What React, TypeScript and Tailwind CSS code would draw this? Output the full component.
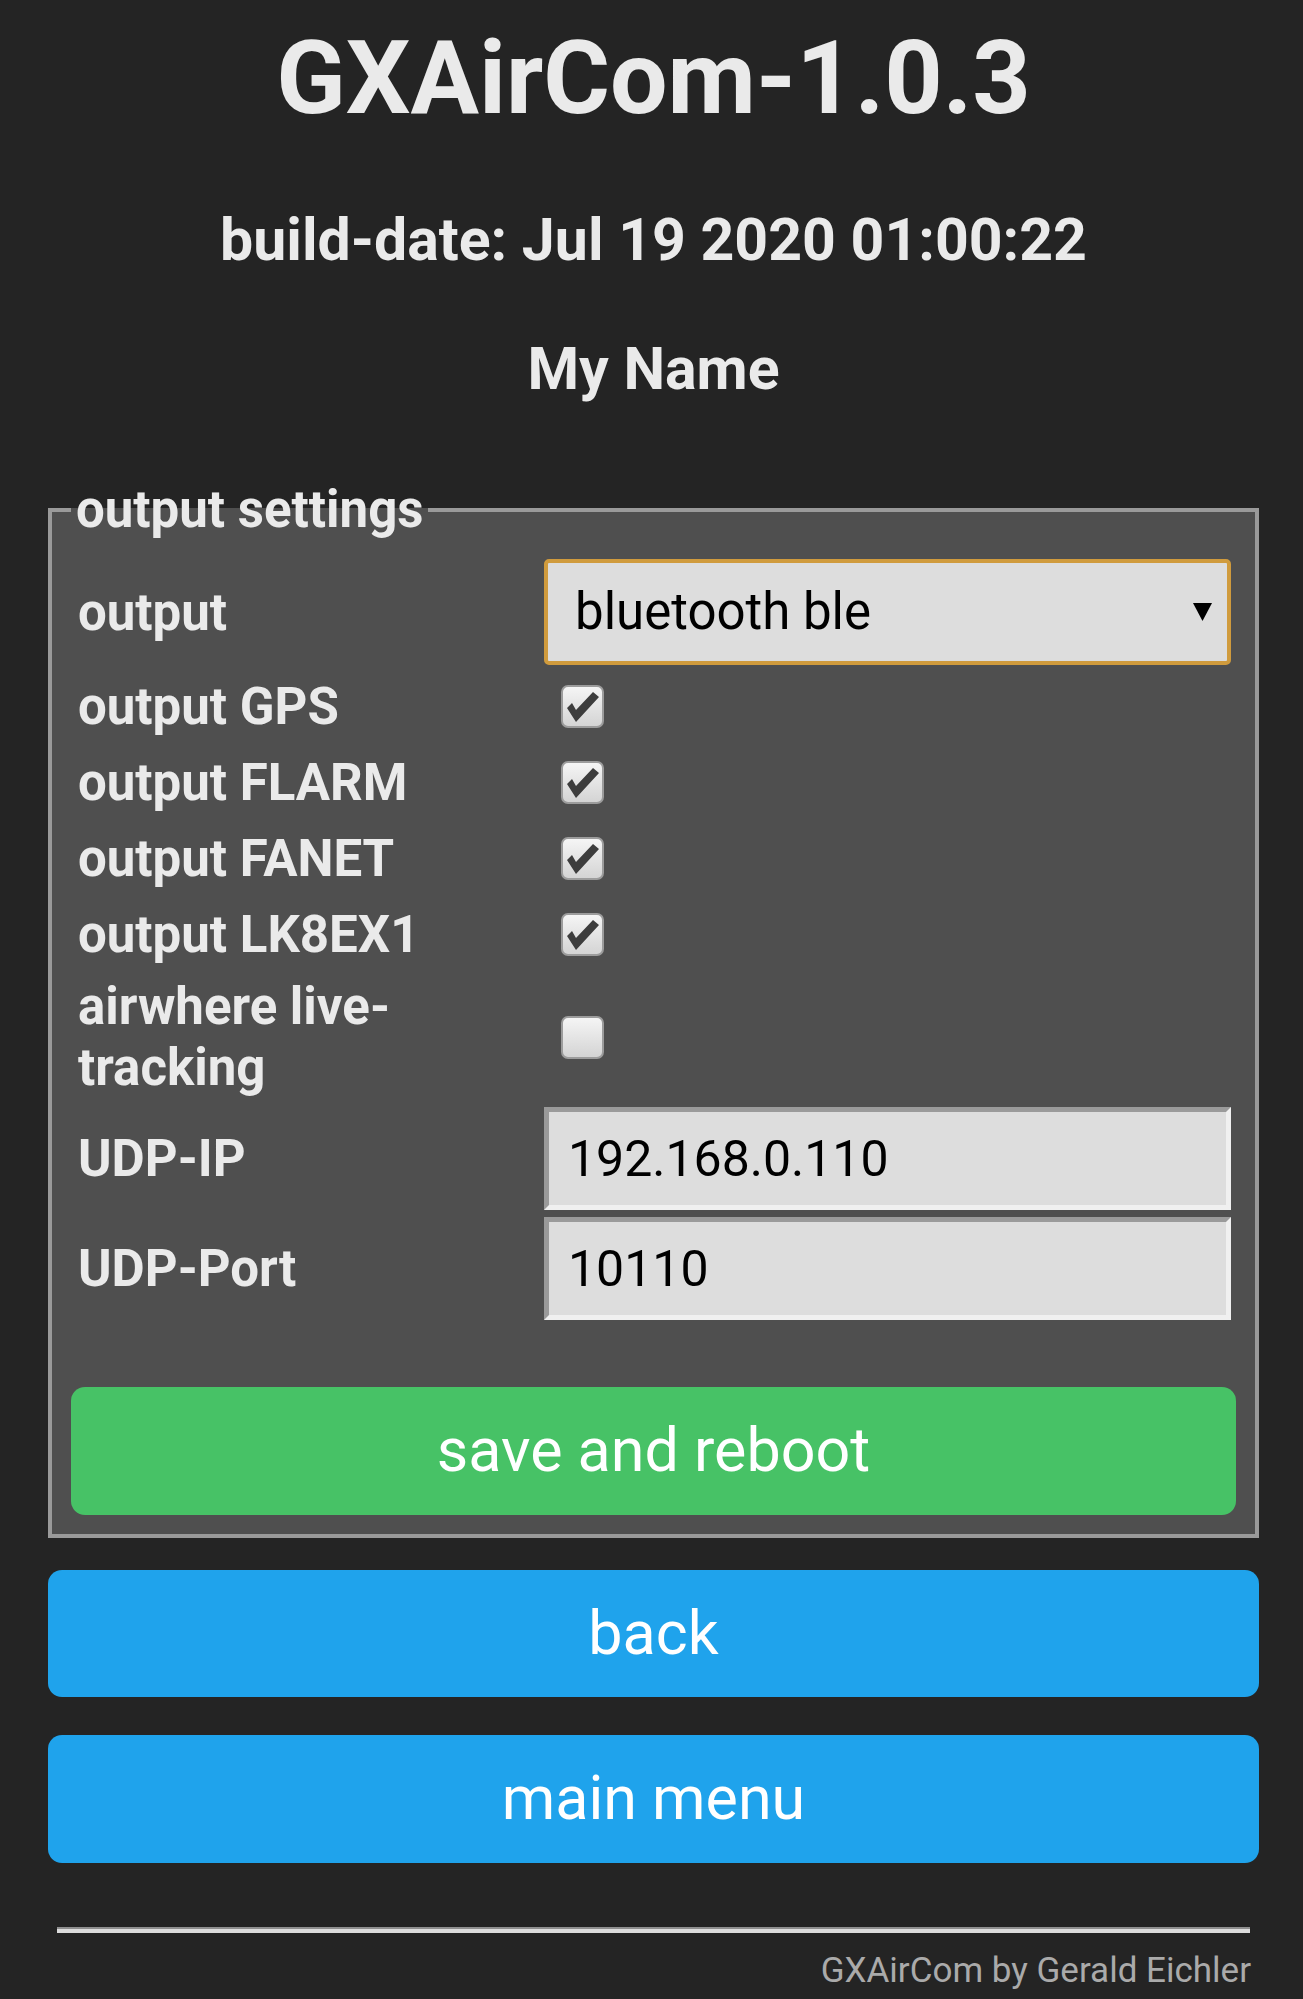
import React from "react";

type CheckRow = { label: string; checked: boolean };

const checkRows: CheckRow[] = [
  { label: "output GPS", checked: true },
  { label: "output FLARM", checked: true },
  { label: "output FANET", checked: true },
  { label: "output LK8EX1", checked: true },
];

function CheckBox({ checked }: { checked: boolean }) {
  return (
    <span className="ml-[17px] flex h-[43px] w-[43px] items-center justify-center rounded-[7px] border-2 border-[#9c9c9c] bg-linear-to-b from-[#f5f5f5] to-[#d4d4d4]">
      {checked && (
        <svg viewBox="2 2 39 39" className="h-[39px] w-[39px]">
          <polygon points="6,23 11,18 15,25 32,7 38,12 15,37" fill="#3d3d3d" />
        </svg>
      )}
    </span>
  );
}

function Label({ children }: { children: React.ReactNode }) {
  return <div className="pl-[7px] text-[51px] font-bold leading-[61px]">{children}</div>;
}

function TextInput({ value }: { value: string }) {
  return (
    <input
      readOnly
      defaultValue={value}
      className="h-[103px] w-[687px] border-[5px] border-t-[#9a9a9a] border-l-[#9a9a9a] border-r-[#f0f0f0] border-b-[#f0f0f0] bg-[#dddddd] pl-[19px] text-[50px] text-black outline-none"
    />
  );
}

export default function App() {
  return (
    <div className="min-h-screen bg-[#242424] font-[Roboto,'Liberation_Sans',sans-serif] text-[#eaeaea]">
      <div className="ml-[48px] w-[1211px] pb-[6px]">
        {/* Header */}
        <div className="text-center">
          <h1 className="pt-[17px] text-[102px] font-bold leading-[122px]">GXAirCom-1.0.3</h1>
          <h3 className="mt-[65px] text-[59px] font-bold leading-[72px]">build-date: Jul 19 2020 01:00:22</h3>
          <h3 className="mt-[57px] text-[59px] font-bold leading-[72px]">My Name</h3>
        </div>

        {/* Settings */}
        <fieldset className="mt-[74px] border-4 border-[#9a9a9a] bg-[#4f4f4f] px-[19px] pb-[19px] pt-[19px]">
          <legend className="px-[5px] text-[51px] font-bold leading-[61px]">output settings</legend>

          <div className="grid h-[106px] grid-cols-[473px_1fr] items-center">
            <Label>output</Label>
            <div className="flex h-[106px] w-[687px] items-center justify-between rounded-[5px] border-4 border-[#d09b3d] bg-[#dddddd] pl-[27px] pr-[15px] text-[51px] text-black">
              <span>bluetooth ble</span>
              <svg viewBox="0 0 19 18" className="h-[18px] w-[19px]">
                <polygon points="0,0 19,0 9.5,18" fill="#000" />
              </svg>
            </div>
          </div>

          <div className="mt-[3px]">
            {checkRows.map((row) => (
              <div key={row.label} className="grid h-[76px] grid-cols-[473px_1fr] items-center">
                <Label>{row.label}</Label>
                <CheckBox checked={row.checked} />
              </div>
            ))}
            <div className="grid h-[130px] grid-cols-[473px_1fr] items-center">
              <Label>airwhere live-tracking</Label>
              <CheckBox checked={false} />
            </div>
          </div>

          <div className="mt-[5px] grid grid-cols-[473px_1fr] items-center">
            <Label>UDP-IP</Label>
            <TextInput value="192.168.0.110" />
          </div>
          <div className="mt-[7px] grid grid-cols-[473px_1fr] items-center">
            <Label>UDP-Port</Label>
            <TextInput value="10110" />
          </div>

          <button className="mt-[67px] block h-[128px] w-full rounded-[14px] bg-[#47c266] text-[61px] text-white">
            save and reboot
          </button>
        </fieldset>

        <button className="mt-[32px] block h-[127px] w-full rounded-[14px] bg-[#1fa3ec] text-[61px] text-white">back</button>
        <button className="mt-[38px] block h-[128px] w-full rounded-[14px] bg-[#1fa3ec] text-[61px] text-white">main menu</button>

        <hr className="mx-[9px] mt-[64px] h-[6px] border-0 border-t-2 border-[#8f8f8f] bg-[#dcdcdc]" />
        <div className="mt-[15px] pr-[8px] text-right text-[35px] leading-[46px] text-[#aaaaaa]">GXAirCom by Gerald Eichler</div>
      </div>
    </div>
  );
}
